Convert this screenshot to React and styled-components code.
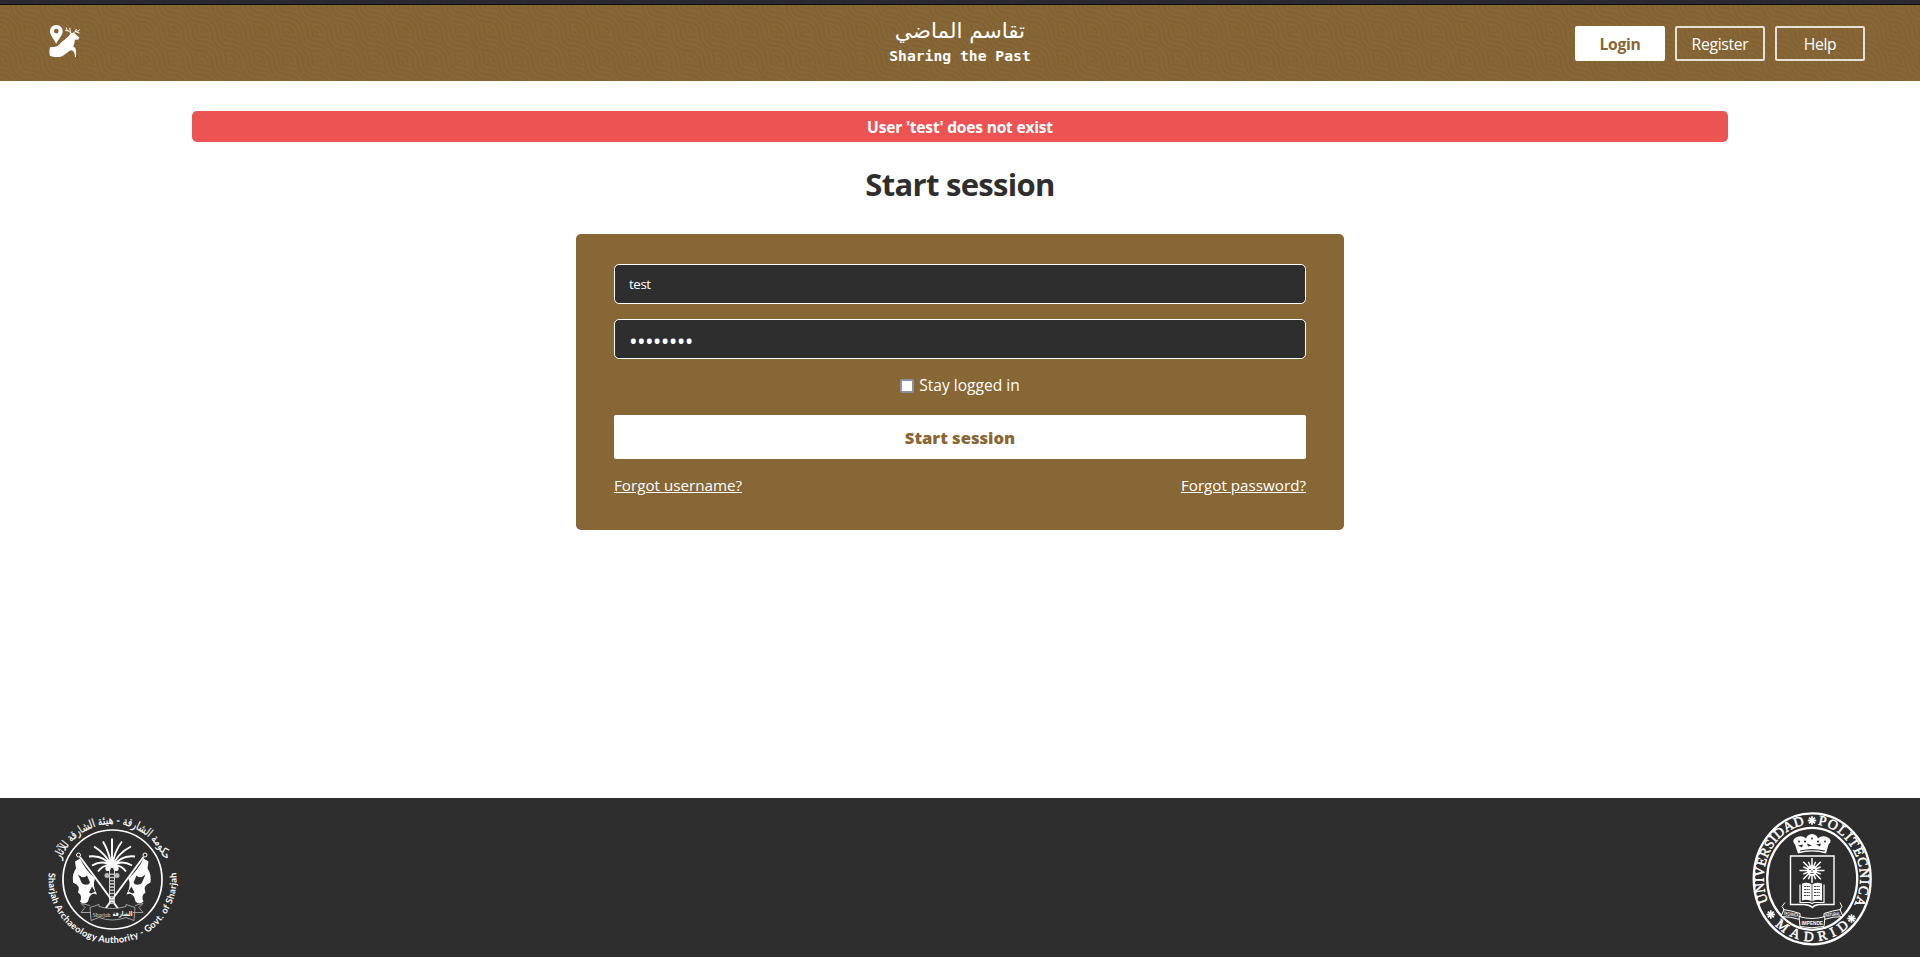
import React from 'react';
import styled, { createGlobalStyle, css } from 'styled-components';

const BROWN = '#876736';
const DARK = '#2e2e2e';

const GlobalStyle = createGlobalStyle`
  * { box-sizing: border-box; }
  body {
    margin: 0;
    background: #fff;
    color: ${DARK};
    font-family: "Open Sans", "Noto Sans", sans-serif;
    font-size: 15.2px;
  }
`;

const Page = styled.div`
  height: 957px;
  display: flex;
  flex-direction: column;
  overflow: hidden;
`;

const TopStrip = styled.div`
  height: 5px;
  flex: none;
  background: #2b2a33;
  border-bottom: 1px solid #0c0c0d;
`;

const Header = styled.header`
  position: relative;
  flex: none;
  height: 76px;
  background: ${BROWN};
  display: grid;
  grid-template-columns: 1fr auto 1fr;
  align-items: center;
  padding: 0 55px 0 48px;
`;

const HeaderPattern = styled.svg`
  position: absolute;
  inset: 0;
  width: 100%;
  height: 100%;
`;

const LogoLink = styled.a`
  position: relative;
  display: flex;
  svg { display: block; }
`;

const Brand = styled.div`
  position: relative;
  color: #fff;
  text-align: center;
  padding-left: 7px;
`;

const BrandArabic = styled.div`
  font-family: "DejaVu Sans", sans-serif;
  font-size: 21.5px;
  line-height: 26px;
`;

const BrandEnglish = styled.div`
  font-family: "DejaVu Sans Mono", "Liberation Mono", monospace;
  font-weight: 700;
  font-size: 14.7px;
  line-height: 24px;
`;

const Nav = styled.nav`
  position: relative;
  display: flex;
  justify-content: flex-end;
  gap: 10px;
`;

const NavButton = styled.button`
  width: 90px;
  height: 35px;
  padding: 2px 0 0;
  border: 2px solid rgba(255, 255, 255, 0.8);
  border-radius: 2px;
  background: transparent;
  color: #fff;
  font-family: inherit;
  font-size: 15.7px;
  letter-spacing: -0.3px;
  ${(p) => p.$active && css`
    background: #fff;
    border-color: #fff;
    color: ${BROWN};
    font-weight: 700;
  `}
`;

const Main = styled.main`
  flex: 1;
  padding: 30px 192px 0;
  display: flex;
  flex-direction: column;
  align-items: center;
`;

const Alert = styled.div`
  width: 100%;
  height: 31px;
  line-height: 32px;
  border-radius: 5px;
  background: #ed5353;
  color: #fff;
  font-weight: 700;
  font-size: 15.6px;
  letter-spacing: -0.22px;
  text-align: center;
`;

const Title = styled.h1`
  margin: 20px 0 28px;
  font-size: 31px;
  line-height: 44px;
  font-weight: 700;
  letter-spacing: -0.7px;
`;

const Card = styled.form`
  width: 768px;
  height: 296px;
  padding: 30px 38px;
  border-radius: 5px;
  background: ${BROWN};
  color: #fff;
  display: flex;
  flex-direction: column;
`;

const Field = styled.input`
  width: 100%;
  height: 40px;
  margin-bottom: 15px;
  padding: 0 14px;
  border: 1px solid #fff;
  border-radius: 5px;
  background: ${DARK};
  color: #fff;
  font-family: inherit;
  font-size: 13.3px;
  letter-spacing: -0.4px;
  outline: none;
  &[type='password'] {
    padding: 3px 14px 0;
    font-size: 23px;
    letter-spacing: -0.7px;
  }
`;

const Remember = styled.label`
  display: flex;
  justify-content: center;
  align-items: center;
  gap: 5px;
  height: 22px;
  margin: 0 0 19px;
  font-size: 15.6px;
  letter-spacing: -0.02px;
`;

const CheckBox = styled.input`
  appearance: none;
  width: 14px;
  height: 14px;
  margin: 2px 0 0;
  border: 2px solid #8f8f9d;
  border-radius: 2px;
  background: #fff;
`;

const Submit = styled.button`
  height: 44px;
  padding: 0;
  border: 0;
  border-radius: 2px;
  background: #fff;
  color: ${BROWN};
  font-family: inherit;
  font-weight: 800;
  font-size: 16.6px;
`;

const Links = styled.div`
  display: flex;
  justify-content: space-between;
  margin-top: 15px;
  line-height: 22px;
`;

const TextLink = styled.a`
  color: #fff;
  text-decoration: underline;
`;

const Footer = styled.footer`
  flex: none;
  height: 159px;
  padding: 0 48px;
  background: ${DARK};
  display: flex;
  justify-content: space-between;
  align-items: center;
  svg { display: block; }
`;

const TILE = 28.7;
const smallRadii = [16.74, 11.96, 7.18, 2.39];
const allRadii = [26.31, 21.53, ...smallRadii];

function Waves() {
  return (
    <HeaderPattern aria-hidden="true">
      <defs>
        <pattern id="waves" x="27.9" y="0.3" width={TILE} height={TILE} patternUnits="userSpaceOnUse">
          <g fill="none" stroke="#826233" strokeWidth="2.2">
            {allRadii.map((r) => <circle key={r} cx="0" cy={TILE} r={r} />)}
            <circle cx={TILE} cy="0" r="19" fill={BROWN} stroke="none" />
            {smallRadii.map((r) => <circle key={r} cx={TILE} cy="0" r={r} />)}
          </g>
        </pattern>
      </defs>
      <rect width="100%" height="100%" fill="url(#waves)" />
    </HeaderPattern>
  );
}

function DeerLogo() {
  return (
    <svg width="34" height="36" viewBox="0 0 34 36" fill="#fff">
      <path fillRule="evenodd" d="M8.300 0C4.600 0 2 2.800 2 6.300C2 10 5.500 13.500 8.200 18.800C11 13.500 14.700 10 14.700 6.300C14.700 2.800 12 0 8.300 0ZM8.300 3.700A2.400 2.400 0 1 1 8.300 8.500A2.400 2.400 0 1 1 8.300 3.700Z" />
      <path d="M2 22.300C5 22 8.500 22.300 11 19.800C13 17 16 15.500 18 13.500C20.500 11.500 22 10 22.500 7.800L26 8L29 10.500L31.500 12.800L30.300 14.500L27 14.800C26.500 17.500 26.300 19 25.200 21.700C27.600 22 28.500 24.800 27.900 31.900L27 31.900C27 28 25.800 25 23 25.200C20 26 18.500 28.500 16 30C14 31.500 12.500 32 10.500 32C7 32.200 4 31.500 2 31C1.200 28 1.200 25 2 22.300Z" />
      <path d="M23.500 8.300C21.500 6.700 18.800 5.800 18.200 2.600M20.500 6L17.200 5.500M22.300 7L21.800 2.800M25 8.300C26.500 6 30 7.200 31.800 4.600M27.500 6.800L28.300 4M28.500 7.300L31.500 8" fill="none" stroke="#fff" strokeWidth="1" />
    </svg>
  );
}

function Flag() {
  return (
    <g>
      <path d="M88 113L50 61.500" stroke="#fff" strokeWidth="2" />
      <circle cx="48.500" cy="59.500" r="2" fill="none" stroke="#fff" />
      <path fill="#fff" d="M45 66L50 63Q55 74 65 83Q62 90 67 99Q60 96 58 106Q54 110 50 106Q53 100 48 97Q51 90 43 87Q42 78 46 73Z" />
      <path fill={DARK} d="M48 79Q54 84 57 80L60 87Q58 91 52 88ZM59 97L62 91L65 96L61 98Z" />
    </g>
  );
}

function SharjahSeal() {
  return (
    <svg width="132" height="138" viewBox="18 13.5 132 138" overflow="visible">
      <defs>
        <path id="sealTop" d="M27 84A55.500 55.500 0 0 1 138 84" />
        <path id="sealArc" d="M18.900 76.300A64 64 0 1 0 146.100 76.300" />
      </defs>
      <circle cx="82.500" cy="84" r="49.500" fill="none" stroke="#fff" strokeWidth="1.700" />
      <text fill="#fff" fontFamily="'DejaVu Sans', sans-serif" fontSize="11.500" direction="rtl" textAnchor="middle" stroke="#fff" strokeWidth=".2">
        <textPath href="#sealTop" startOffset="50%" textLength="134" lengthAdjust="spacingAndGlyphs">حكومة الشارقة - هيئة الشارقة للآثار</textPath>
      </text>
      <text fill="#fff" fontFamily="Lato, sans-serif" fontSize="9.200" fontWeight="700">
        <textPath href="#sealArc" startOffset="1" textLength="213" lengthAdjust="spacing">Sharjah Archaeology Authority - Govt. of Sharjah</textPath>
      </text>
      <Flag />
      <g transform="matrix(-1 0 0 1 163.500 0)"><Flag /></g>
      <path d="M79.500 75V109M84.500 75V109" stroke="#fff" strokeWidth=".8" />
      <path d="M82 78V110" stroke="#bbb" strokeWidth="4.500" strokeDasharray="1.600 1.600" />
      <g fill="none" stroke="#fff" strokeWidth="1.900">
        <path d="M82 72Q79 56 73 46M82 72Q82 56 82 43M82 72Q84 56 92 46M82 72Q77 59 64 51M82 72Q87 58 101 51M82 72Q74 59 59 61M82 72Q91 59 105 61M82 72Q74 63 62 70M82 72Q90 63 102 70M82 72Q75 67 68 76M82 72Q89 67 96 76" />
      </g>
      <circle cx="78" cy="73" r="2.600" fill="#fff" />
      <circle cx="86" cy="73" r="2.600" fill="#fff" />
      <circle cx="77" cy="80" r="2.500" fill="#bbb" />
      <circle cx="87" cy="80" r="2.500" fill="#bbb" />
      <path fill={DARK} stroke="#bbb" strokeWidth=".8" d="M60 110L51 108L55 112L51 117L61 117M105 110L113 108L109 112L113 117L103 117M60 112L69 109L69 111Q82 115 96 111L96 109L105 112L104 125L96 122Q82 127 69 122L61 125Z" />
      <text x="62.500" y="121" fill="#ddd" fontSize="6.500" fontFamily="'Liberation Serif', serif" textLength="18" lengthAdjust="spacingAndGlyphs">Sharjah</text>
      <text x="102.500" y="120.500" fill="#fff" fontSize="6.500" direction="rtl" fontWeight="700" fontFamily="'DejaVu Sans', sans-serif" textLength="20" lengthAdjust="spacingAndGlyphs">الشارقة</text>
    </svg>
  );
}

const sunRays = Array.from({ length: 16 }, (_, i) => i * 22.5);

function Star({ x, y }) {
  return (
    <g transform={`translate(${x} ${y})`} stroke="#fff" strokeWidth="1.700">
      {[0, 45, 90, 135].map((a) => <path key={a} d="M-4.200 0H4.200" transform={`rotate(${a})`} />)}
    </g>
  );
}

function MadridSeal() {
  return (
    <svg width="122" height="138" viewBox="20 13.5 122 138">
      <defs>
        <path id="upmLeft" d="M38.200 106.400A48.300 54.500 0 0 1 78.500 28.900" />
        <path id="upmRight" d="M87 29.100A48.300 54.500 0 0 1 122.800 112.200" />
        <path id="upmBottom" d="M43 127.600A56.300 62.500 0 0 0 120.500 129.500" />
      </defs>
      <g fill="none" stroke="#fff" strokeWidth="2.300">
        <ellipse cx="82.200" cy="83.300" rx="58.500" ry="65.500" />
        <ellipse cx="82.200" cy="83.300" rx="45" ry="51" />
      </g>
      <g fill="#fff" fontFamily="'Liberation Serif', serif" fontSize="13.800" stroke="#fff" strokeWidth=".5">
        <text><textPath href="#upmLeft" textLength="97">UNIVERSIDAD</textPath></text>
        <text><textPath href="#upmRight" startOffset="1" textLength="101">POLITECNICA</textPath></text>
        <text><textPath href="#upmBottom" startOffset="3" textLength="82">MADRID</textPath></text>
      </g>
      <Star x={82} y={25} />
      <Star x={40.8} y={119} />
      <Star x={121.5} y={123} />
      <g fill="#fff">
        <path d="M65 49Q61 45 66 42Q72 39 76 43Q77 39 82 38.500Q87 39 88 43Q92 39 98 42Q103 45 98.500 49L96 58Q82 54 68 58Z" />
        <g fill={DARK}>
          <circle cx="69" cy="46" r="1" /><circle cx="75" cy="46" r="1.100" /><circle cx="82" cy="43" r="1" />
          <circle cx="88" cy="46" r="1.100" /><circle cx="95" cy="46" r="1" />
          <path d="M68 50L73 49L72 52ZM77 48L82 50L78 51ZM86 49L91 48L90 51ZM70 55Q82 52 95 55L94.500 56Q82 53.500 70 56Z" />
        </g>
      </g>
      <path d="M60.500 60.500H104V109H90Q85 109 82.500 112Q79 109 74 109H60.500Z" fill="none" stroke="#fff" strokeWidth="1.400" />
      <g transform="translate(82 75)" stroke="#fff">
        {sunRays.map((a, i) => <path key={a} d={`M0 -4V${i % 2 ? -9.5 : -12.5}`} strokeWidth="1.500" transform={`rotate(${a})`} />)}
        <circle r="5.200" fill="#fff" stroke="none" />
        <path d="M-3 -1H-1M1 -1H3M0 -.5V1.500M-1.800 3H1.800" stroke={DARK} strokeWidth=".8" />
      </g>
      <path d="M70 89V107H80L82 108L84 107H94V89" fill="none" stroke="#fff" strokeWidth="1.200" />
      <path d="M72 88Q78 86 82 89Q86 86 92 88V105Q86 103 82 106Q78 103 72 105Z" fill="#fff" />
      <path d="M74 91H80M74 94H80M74 97H80M74 100H80M84 91H90M84 94H90M84 97H90M84 100H90" stroke={DARK} strokeWidth=".9" strokeDasharray="2 .6" />
      <path d="M82 89V106" stroke={DARK} strokeWidth=".8" />
      <g fill={DARK} stroke="#fff" strokeWidth="1">
        <path d="M55 107L52 111L54 114L51 121Q60 121 70 124V118Q61 115 53 114M110 107L112 111L110 114L113 121Q103 121 94 124V118Q103 115 111 114" />
        <path d="M69 121Q82 125 95 121L94 131Q82 133.500 70 131Z" />
      </g>
      <g fill="#fff" fontSize="5" fontWeight="700" fontFamily="'Liberation Sans', sans-serif">
        <text x="53.500" y="119.500" transform="rotate(7 53.500 119.500)" textLength="15" lengthAdjust="spacingAndGlyphs">TECHNICA</text>
        <text x="71.500" y="129.800" textLength="21.500" lengthAdjust="spacingAndGlyphs">IMPENDE</text>
        <text x="95.500" y="121.500" transform="rotate(-7 95.500 121.500)" textLength="15" lengthAdjust="spacingAndGlyphs">NATURAL</text>
      </g>
    </svg>
  );
}

export default function App() {
  return (
    <Page>
      <GlobalStyle />
      <TopStrip />
      <Header>
        <Waves />
        <LogoLink><DeerLogo /></LogoLink>
        <Brand>
          <BrandArabic dir="rtl">تقاسم الماضي</BrandArabic>
          <BrandEnglish>Sharing the Past</BrandEnglish>
        </Brand>
        <Nav>
          <NavButton $active>Login</NavButton>
          <NavButton>Register</NavButton>
          <NavButton>Help</NavButton>
        </Nav>
      </Header>
      <Main>
        <Alert>User 'test' does not exist</Alert>
        <Title>Start session</Title>
        <Card onSubmit={(e) => e.preventDefault()}>
          <Field type="text" defaultValue="test" />
          <Field type="password" defaultValue="password" />
          <Remember><CheckBox type="checkbox" />Stay logged in</Remember>
          <Submit>Start session</Submit>
          <Links>
            <TextLink>Forgot username?</TextLink>
            <TextLink>Forgot password?</TextLink>
          </Links>
        </Card>
      </Main>
      <Footer>
        <SharjahSeal />
        <MadridSeal />
      </Footer>
    </Page>
  );
}
